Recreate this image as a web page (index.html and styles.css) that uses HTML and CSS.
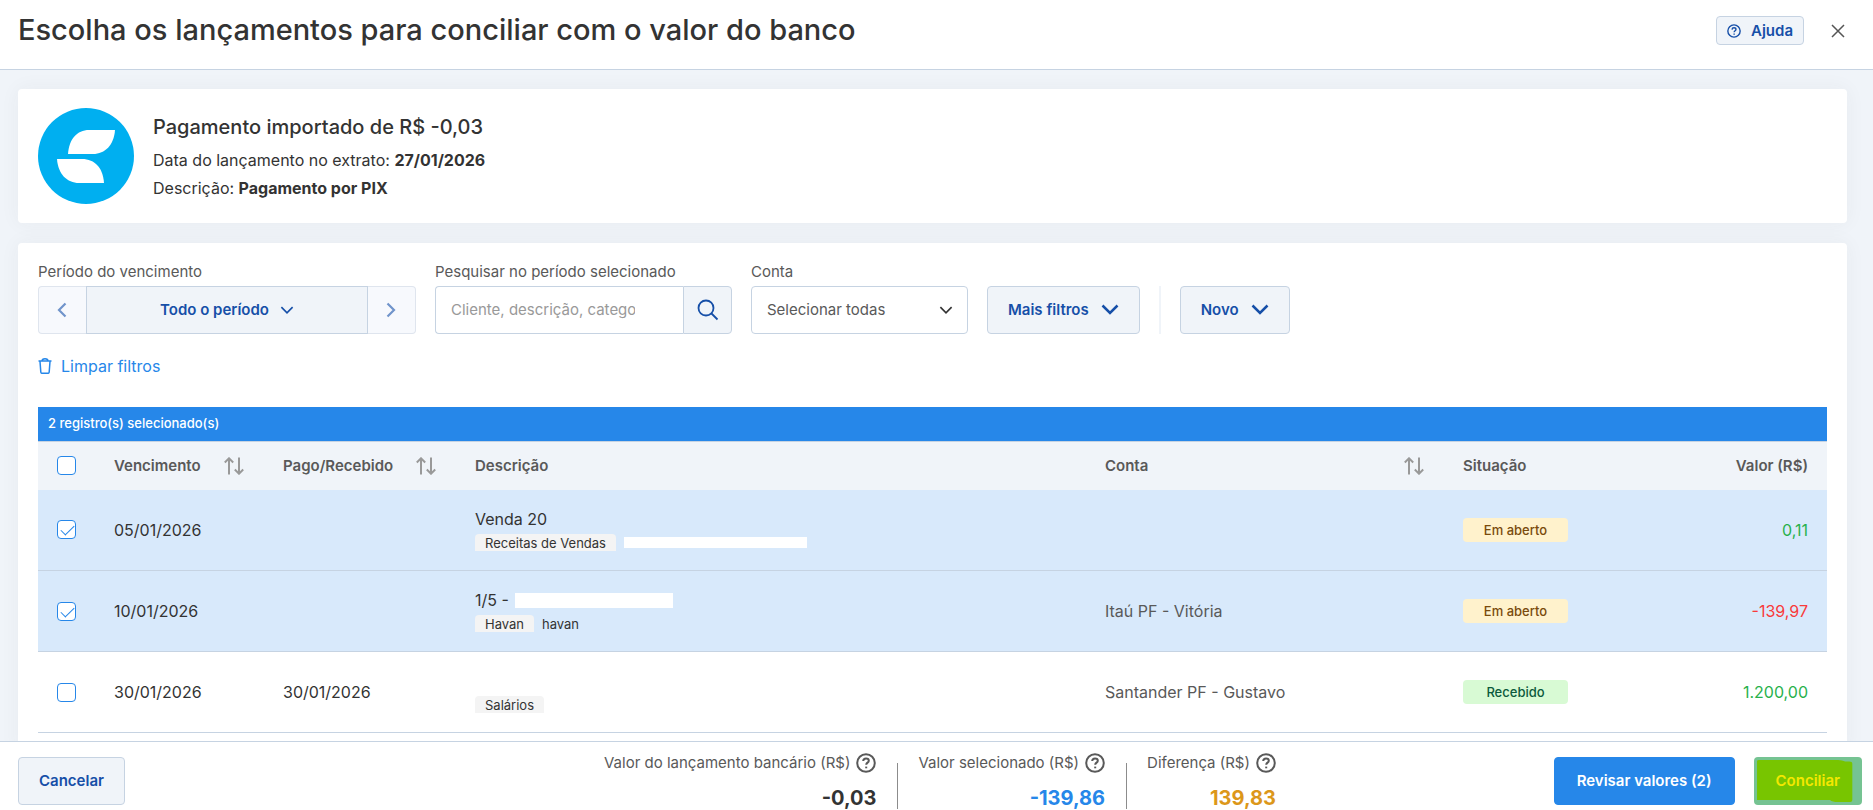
FILE: index.html
```html
<!DOCTYPE html>
<html lang="pt-BR">
<head>
  <meta charset="UTF-8">
  <meta name="viewport" content="width=device-width, initial-scale=1.0">
  <title>Conciliar lançamentos</title>
  <link rel="stylesheet" href="styles.css">
</head>
<body>
  <svg class="sprite" aria-hidden="true">
    <symbol id="i-help" viewBox="0 0 20 20">
      <circle cx="10" cy="10" r="8.8"/>
      <path d="M7.2 8c.1-1.700 1.200-2.600 2.800-2.600s2.800.9 2.800 2.300c0 1.900-2.600 2-2.600 4.100"/>
      <path d="M10.200 13.600v1.700"/>
    </symbol>
    <symbol id="i-down" viewBox="0 0 18 12"><path d="M1.500 1.500L9 9l7.500-7.500"/></symbol>
    <symbol id="i-sort" viewBox="0 0 20 18">
      <path d="M5 17.500V1.500M.8 5.500L5 1.300l4.200 4.200M15 .5v16M10.800 12.500L15 16.700l4.200-4.200"/>
    </symbol>
  </svg>

  <header class="header">
    <h1>Escolha os lançamentos para conciliar com o valor do banco</h1>
    <div class="header-actions">
      <button type="button" class="btn btn-small"><svg class="icon icon-help-small"><use href="#i-help"/></svg>Ajuda</button>
      <button type="button" class="btn-close" aria-label="Fechar">
        <svg class="icon" width="14" height="14" viewBox="0 0 14 14"><path d="M1 1l12 12M13 1L1 13"/></svg>
      </button>
    </div>
  </header>

  <main class="content">
    <section class="card resumo">
      <svg class="logo" viewBox="0 0 96 96" aria-hidden="true">
        <circle cx="48" cy="48" r="48" fill="#00aff0"/>
        <path fill="#fff" d="M51 22h26c-1 15-10 24-22 24H30c1-15 9-24 21-24z"/>
        <path fill="#fff" d="M19 51h25c13 0 21 9 22 24H41c-12 0-21-9-22-24z"/>
      </svg>
      <div>
        <h2>Pagamento importado de R$ -0,03</h2>
        <p>Data do lançamento no extrato: <strong>27/01/2026</strong></p>
        <p>Descrição: <strong>Pagamento por PIX</strong></p>
      </div>
    </section>

    <section class="card lancamentos">
      <form class="filtros">
        <div class="campo">
          <span class="rotulo" id="lblPeriodo">Período do vencimento</span>
          <div class="grupo periodo" role="group" aria-labelledby="lblPeriodo">
            <button type="button" class="seta" aria-label="Período anterior" disabled>
              <svg class="icon" width="10" height="16" viewBox="0 0 10 16"><path d="M8.500 1.500L2 8l6.500 6.500"/></svg>
            </button>
            <button type="button" class="periodo-atual">Todo o período <svg class="icon icon-chevron-small"><use href="#i-down"/></svg></button>
            <button type="button" class="seta" aria-label="Próximo período" disabled>
              <svg class="icon" width="10" height="16" viewBox="0 0 10 16"><path d="M1.500 1.500L8 8l-6.500 6.500"/></svg>
            </button>
          </div>
        </div>
        <div class="campo">
          <label class="rotulo" for="busca">Pesquisar no período selecionado</label>
          <div class="grupo busca">
            <input type="text" id="busca" placeholder="Cliente, descrição, categoria">
            <button type="button" aria-label="Pesquisar">
              <svg class="icon" width="22" height="22" viewBox="0 0 22 22"><circle cx="9" cy="9" r="7.500"/><path d="M14.500 14.500l6 6"/></svg>
            </button>
          </div>
        </div>
        <div class="campo">
          <label class="rotulo" for="conta">Conta</label>
          <div class="select">
            <select id="conta"><option>Selecionar todas</option></select>
            <svg class="icon icon-chevron-small"><use href="#i-down"/></svg>
          </div>
        </div>
        <button type="button" class="btn btn-menu">Mais filtros <svg class="icon icon-chevron"><use href="#i-down"/></svg></button>
        <span class="divisor"></span>
        <button type="button" class="btn btn-menu">Novo <svg class="icon icon-chevron"><use href="#i-down"/></svg></button>
      </form>

      <a href="#" class="limpar">
        <svg class="icon" width="14" height="16" viewBox="0 0 14 16"><path d="M.5 3h13M4 3c0-3 6-3 6 0M2 3.500l.8 10.500c0 .9.500 1.300 1.300 1.300h5.800c.8 0 1.300-.4 1.300-1.300L12 3.500"/></svg>
        Limpar filtros
      </a>

      <div class="selecionados">2 registro(s) selecionado(s)</div>
      <table>
        <colgroup>
          <col class="c-check"><col class="c-venc"><col class="c-pago"><col><col class="c-conta"><col class="c-sit"><col class="c-valor">
        </colgroup>
        <thead>
          <tr>
            <th><input type="checkbox" aria-label="Selecionar todos"></th>
            <th><div class="ordenar">Vencimento <svg class="icon"><use href="#i-sort"/></svg></div></th>
            <th><div class="ordenar">Pago/Recebido <svg class="icon"><use href="#i-sort"/></svg></div></th>
            <th>Descrição</th>
            <th><div class="ordenar">Conta <svg class="icon"><use href="#i-sort"/></svg></div></th>
            <th>Situação</th>
            <th class="num">Valor (R$)</th>
          </tr>
        </thead>
        <tbody>
          <tr class="ativo">
            <td><input type="checkbox" aria-label="Selecionar Venda 20" checked></td>
            <td>05/01/2026</td>
            <td></td>
            <td>
              <div class="desc">Venda 20</div>
              <div class="tags"><span class="tag">Receitas de Vendas</span><span class="oculto"></span></div>
            </td>
            <td class="conta"></td>
            <td><span class="status aberto">Em aberto</span></td>
            <td class="num entrada">0,11</td>
          </tr>
          <tr class="ativo">
            <td><input type="checkbox" aria-label="Selecionar Havan" checked></td>
            <td>10/01/2026</td>
            <td></td>
            <td>
              <div class="desc">1/5 - <span class="oculto oculto-alto"></span></div>
              <div class="tags"><span class="tag">Havan</span><span>havan</span></div>
            </td>
            <td class="conta">Itaú PF - Vitória</td>
            <td><span class="status aberto">Em aberto</span></td>
            <td class="num saida">-139,97</td>
          </tr>
          <tr>
            <td><input type="checkbox" aria-label="Selecionar Salários"></td>
            <td>30/01/2026</td>
            <td>30/01/2026</td>
            <td>
              <div class="desc"></div>
              <div class="tags"><span class="tag">Salários</span></div>
            </td>
            <td class="conta">Santander PF - Gustavo</td>
            <td><span class="status recebido">Recebido</span></td>
            <td class="num entrada">1.200,00</td>
          </tr>
        </tbody>
      </table>
    </section>
  </main>

  <footer class="footer">
    <div><button type="button" class="btn">Cancelar</button></div>
    <div class="totais">
      <div class="total">
        <span>Valor do lançamento bancário (R$) <svg class="icon"><use href="#i-help"/></svg></span>
        <strong>-0,03</strong>
      </div>
      <div class="total">
        <span>Valor selecionado (R$) <svg class="icon"><use href="#i-help"/></svg></span>
        <strong class="azul">-139,86</strong>
      </div>
      <div class="total">
        <span>Diferença (R$) <svg class="icon"><use href="#i-help"/></svg></span>
        <strong class="laranja">139,83</strong>
      </div>
    </div>
    <div class="acoes">
      <button type="button" class="btn btn-primary">Revisar valores (2)</button>
      <button type="button" class="btn btn-conciliar">
        <svg class="marcador" viewBox="0 0 107 48" preserveAspectRatio="none" aria-hidden="true"><path fill="#78c500" d="M3 4q0-1 2-1h78q4 0 7 1.500h4q3 0 3 2V43q0 2-2 2H83q-6 0-8-2H3z"/></svg>
        <span>Conciliar</span>
      </button>
    </div>
  </footer>
</body>
</html>
```
FILE: styles.css
```css
* {
  box-sizing: border-box;
}
body {
  margin: 0;
  height: 100vh;
  display: flex;
  flex-direction: column;
  overflow: hidden;
  background: #f0f4f9;
  color: #333;
  font-family: Inter, "Open Sans", Arial, sans-serif;
  font-size: 15px;
  line-height: 20px;
}
h1, h2, p {
  margin: 0;
}
button, input, select {
  font: inherit;
}
button {
  cursor: pointer;
}
.sprite {
  display: none;
}
.icon {
  fill: none;
  stroke: currentColor;
  stroke-width: 1.5;
  flex: none;
}
.icon-chevron {
  width: 18px;
  height: 12px;
  stroke-width: 2.5;
}
.icon-chevron-small {
  width: 14px;
  height: 9px;
  stroke-width: 2.2;
}

/* header */
.header {
  flex: none;
  display: flex;
  align-items: flex-start;
  justify-content: space-between;
  height: 70px;
  padding: 16px 28px 0 18px;
  background: #fff;
  border-bottom: 1px solid #c6d3e2;
}
h1 {
  font-size: 29px;
  line-height: 28px;
  font-weight: 500;
}
.header-actions {
  display: flex;
  align-items: center;
  gap: 27px;
}
.btn {
  display: inline-flex;
  align-items: center;
  justify-content: center;
  height: 48px;
  padding: 0 20px;
  border: 1px solid #c6d3e2;
  border-radius: 4px;
  background: #f0f4f9;
  color: #164fa8;
  font-weight: 600;
}
.btn-small {
  height: 29px;
  padding: 0 10px;
  gap: 10px;
}
.icon-help-small {
  width: 14px;
  height: 14px;
  stroke-width: 2;
}
.btn-close {
  display: flex;
  padding: 0;
  border: 0;
  background: none;
  color: #555;
}

/* content */
.content {
  flex: 1;
  min-height: 0;
  overflow: hidden;
  padding: 19px 26px 0 18px;
}
.card {
  background: #fff;
  border-radius: 4px;
  box-shadow: 0 0 20px rgba(51, 51, 51, 0.05);
}
.resumo {
  display: flex;
  align-items: center;
  gap: 19px;
  padding: 19px 20px;
  margin-bottom: 20px;
}
.logo {
  width: 96px;
  height: 96px;
}
.resumo p {
  font-size: 16px;
}
h2 {
  font-size: 20px;
  line-height: 26px;
  font-weight: 500;
  margin-bottom: 10px;
}
.resumo p + p {
  margin-top: 8px;
}
.lancamentos {
  padding: 19px 20px;
}
.filtros {
  display: flex;
  align-items: flex-end;
  gap: 19px;
}
.rotulo {
  display: block;
  margin-bottom: 4px;
  color: #595959;
}
.grupo {
  display: flex;
  height: 48px;
}
.grupo button {
  display: flex;
  align-items: center;
  justify-content: center;
  gap: 11px;
  padding: 0;
  border: 1px solid #c6d3e2;
  background: #f0f4f9;
  color: #164fa8;
  font-weight: 600;
}
.periodo {
  width: 378px;
}
.periodo .periodo-atual {
  flex: 1;
}
.grupo .seta {
  width: 48px;
  padding-right: 2px;
  border-color: #dfe5ee;
  background: #f7f9fd;
  color: #7094cb;
}
.seta .icon {
  stroke-width: 2.2;
}
.seta:first-child {
  border-right: 0;
  border-radius: 4px 0 0 4px;
}
.seta:last-child {
  border-left: 0;
  border-radius: 0 4px 4px 0;
}
.busca {
  width: 297px;
}
.busca input {
  flex: 1;
  min-width: 0;
  padding: 0 48px 0 15px;
  border: 1px solid #c6d3e2;
  border-right: 0;
  border-radius: 4px 0 0 4px;
}
.busca input::placeholder {
  color: #999;
}
.busca button {
  width: 49px;
  border-radius: 0 4px 4px 0;
}
.busca .icon {
  stroke-width: 1.8;
}
.select {
  position: relative;
  width: 217px;
}
.select select {
  display: block;
  width: 100%;
  height: 48px;
  padding: 0 15px;
  border: 1px solid #c6d3e2;
  border-radius: 4px;
  background: #fff;
  color: #595959;
  appearance: none;
}
.select .icon {
  position: absolute;
  right: 15px;
  top: 20px;
  color: #333;
  pointer-events: none;
}
.btn-menu {
  gap: 12px;
}
.divisor {
  width: 2px;
  height: 48px;
  background: #f0f4f9;
}
.limpar {
  display: inline-flex;
  align-items: center;
  gap: 9px;
  margin: 22px 0 31px;
  color: #2687e9;
  font-size: 16px;
  text-decoration: none;
}
.selecionados {
  height: 34px;
  padding: 0 10px;
  background: #2687e9;
  color: #fff;
  font-size: 13px;
  line-height: 32px;
  font-weight: 500;
}

/* table */
table {
  width: 100%;
  table-layout: fixed;
  border-collapse: collapse;
}
.c-check { width: 56px; }
.c-venc { width: 169px; }
.c-pago { width: 192px; }
.c-conta { width: 358px; }
.c-sit { width: 192px; }
.c-valor { width: 192px; }
th, td {
  padding: 0 19px 0 20px;
  text-align: left;
}
th:first-child, td:first-child {
  padding-left: 19px;
}
th {
  height: 48px;
  border-top: 1px solid #c6d3e2;
  background: #f0f4f9;
  color: #595959;
  font-weight: 600;
}
td {
  height: 81px;
  border-bottom: 1px solid #c6d3e2;
  font-size: 16px;
}
.ativo td {
  background: #d8e9fb;
}
.num {
  text-align: right;
}
.ordenar {
  display: flex;
  align-items: center;
  justify-content: space-between;
}
.ordenar .icon {
  width: 20px;
  height: 18px;
  color: #999;
  stroke-width: 2;
}
input[type="checkbox"] {
  appearance: none;
  display: block;
  width: 19px;
  height: 19px;
  margin: 0;
  border: 1px solid #2687e9;
  border-radius: 4px;
  background: #fff;
}
input[type="checkbox"]:checked::before {
  content: "";
  display: block;
  width: 12px;
  height: 6px;
  margin: 4px 0 0 3px;
  border-left: 1px solid #2687e9;
  border-bottom: 1px solid #2687e9;
  transform: rotate(-45deg);
}
.desc {
  display: flex;
  align-items: center;
  gap: 6px;
  height: 20px;
  margin-bottom: 5px;
}
.tags {
  display: flex;
  align-items: center;
  gap: 8px;
  height: 17px;
  font-size: 13px;
}
.tag {
  height: 17px;
  padding: 0 10px;
  border-radius: 4px 4px 0 0;
  background: #f4f4f4;
  line-height: 18px;
}
.oculto {
  width: 183px;
  height: 11px;
  background: #fff;
}
.oculto-alto {
  width: 158px;
  height: 15px;
}
.conta {
  color: #595959;
}
.status {
  display: block;
  width: 105px;
  border-radius: 4px;
  font-size: 13px;
  line-height: 24px;
  font-weight: 500;
  text-align: center;
}
.aberto {
  background: #fff2cc;
  color: #7a4b0c;
}
.recebido {
  background: #d8fad4;
  color: #0c5a3c;
}
.entrada {
  color: #28b14c;
}
.saida {
  color: #f93a3a;
}

/* footer */
.footer {
  flex: none;
  display: grid;
  grid-template-columns: 1fr auto 1fr;
  align-items: start;
  padding: 15px 11px 5px 18px;
  background: #fff;
  border-top: 1px solid #c6d3e2;
}
.totais {
  display: flex;
  height: 48px;
}
.total {
  position: relative;
  display: flex;
  flex-direction: column;
  align-items: flex-end;
  gap: 15px;
  margin-top: -4px;
  padding: 0 21px;
  color: #595959;
}
.total:first-child {
  padding-left: 0;
}
.total:last-child {
  padding-right: 0;
}
.total + .total::before {
  content: "";
  position: absolute;
  left: 0;
  top: 10px;
  bottom: -4px;
  border-left: 1px solid #8c8c8c;
}
.total span {
  display: flex;
  align-items: center;
  gap: 6px;
}
.total .icon {
  width: 20px;
  height: 20px;
  stroke-width: 2;
}
.total strong {
  color: #333;
  font-size: 20px;
}
.total .azul {
  color: #2687e9;
}
.total .laranja {
  color: #dc971a;
}
.acoes {
  display: flex;
  justify-content: flex-end;
  gap: 19px;
}
.acoes .btn {
  padding: 0 22px;
}
.btn-primary {
  border-color: #2687e9;
  background: #2687e9;
  color: #fff;
}
.btn-conciliar {
  position: relative;
  border: 0;
  background: #75c392;
  color: #f4e800;
}
.marcador {
  position: absolute;
  inset: 0;
  width: 100%;
  height: 100%;
}
.btn-conciliar span {
  position: relative;
}
```
